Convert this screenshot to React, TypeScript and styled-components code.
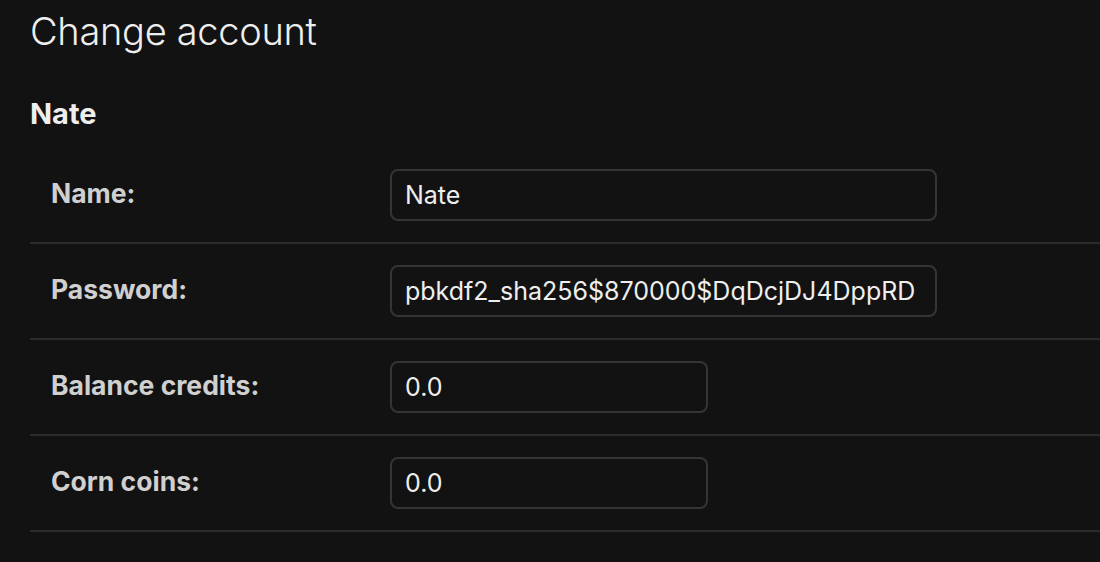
import * as React from 'react';
import styled, { createGlobalStyle } from 'styled-components';

const GlobalStyle = createGlobalStyle`
  html, body {
    margin: 0;
    padding: 0;
    background: #121212;
  }
  body {
    font-family: Inter, "Noto Sans", "Liberation Sans", sans-serif;
    color: #eeeeee;
  }
`;

const Content = styled.div`
  padding: 8px 0 0 30px;
  overflow: hidden;
`;

const Title = styled.h1`
  margin: 0;
  font-size: 38px;
  line-height: 47px;
  font-weight: 300;
  color: #eeeeee;
  letter-spacing: -0.3px;
`;

const ObjectName = styled.h2`
  margin: 41px 0 0;
  font-size: 29px;
  line-height: 36px;
  font-weight: 700;
  color: #eeeeee;
`;

const Fieldset = styled.div`
  margin-top: 16px;
  display: flex;
  flex-direction: column;
`;

const Row = styled.div`
  display: flex;
  align-items: flex-start;
  padding: 21px 0;
  border-bottom: 2px solid #2a2a2a;
`;

const Label = styled.label`
  flex: 0 0 339px;
  padding: 8px 0 0 21px;
  font-size: 26.5px;
  line-height: 32px;
  font-weight: 700;
  color: #d0d0d0;
`;

const Input = styled.input<{ $wide?: boolean }>`
  box-sizing: border-box;
  width: ${(p) => (p.$wide ? '547px' : '318px')};
  height: 52px;
  margin: 0;
  padding: 0 11px 0 13px;
  border: 2px solid #353535;
  border-radius: 8px;
  background: #121212;
  color: #eeeeee;
  font-family: Inter, "Noto Sans", "Liberation Sans", sans-serif;
  font-size: 25px;
  outline: none;
`;

type Field = { label: string; value: string; wide?: boolean };

const fields: Field[] = [
  { label: 'Name:', value: 'Nate', wide: true },
  { label: 'Password:', value: 'pbkdf2_sha256$870000$DqDcjDJ4DppRD', wide: true },
  { label: 'Balance credits:', value: '0.0' },
  { label: 'Corn coins:', value: '0.0' },
];

const App: React.FunctionComponent = () => (
  <>
    <GlobalStyle />
    <Content>
      <Title>Change account</Title>
      <ObjectName>Nate</ObjectName>
      <Fieldset>
        {fields.map((f) => (
          <Row key={f.label}>
            <Label>{f.label}</Label>
            <Input $wide={f.wide} defaultValue={f.value} readOnly />
          </Row>
        ))}
      </Fieldset>
    </Content>
  </>
);

export default App;
